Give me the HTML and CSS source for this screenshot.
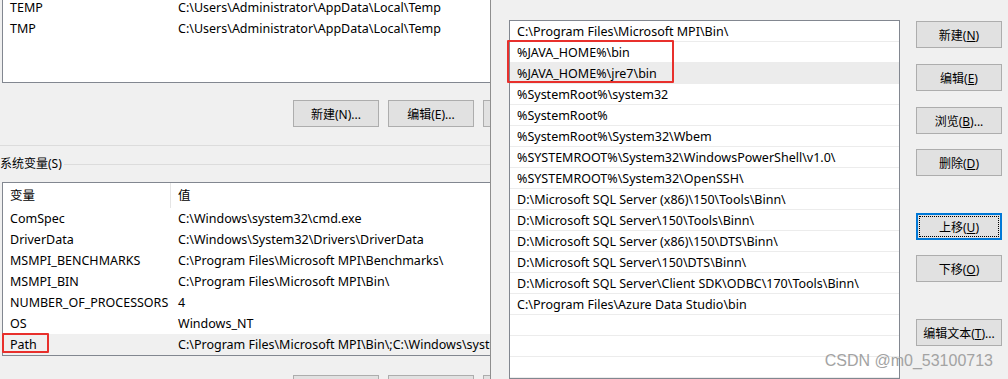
FILE: index.html
```html
<!DOCTYPE html>
<html lang="zh-CN">

<head>
  <meta charset="utf-8" />
  <meta name="viewport" content="width=device-width, initial-scale=1.0" />
  <title>环境变量</title>

  <link rel="stylesheet" href="styles.css">

</head>

<body>

  <div class="screen">

    <!-- environment variables dialog (behind) -->
    <section class="env">

      <div class="list user-list">
        <div class="row"><span class="name">TEMP</span><span class="val">C:\Users\Administrator\AppData\Local\Temp</span></div>
        <div class="row"><span class="name">TMP</span><span class="val">C:\Users\Administrator\AppData\Local\Temp</span></div>
      </div>

      <div class="btn-row">
        <button class="btn">新建(N)...</button>
        <button class="btn">编辑(E)...</button>
        <button class="btn">删除(D)</button>
      </div>

      <div class="group-end"></div>

      <div class="group-title">
        <span>系统变量(S)</span>
        <div class="group-line"></div>
      </div>

      <div class="list sys-list">
        <div class="row head"><span class="name">变量</span><span class="val">值</span></div>
        <div class="row"><span class="name">ComSpec</span><span class="val">C:\Windows\system32\cmd.exe</span></div>
        <div class="row"><span class="name">DriverData</span><span class="val">C:\Windows\System32\Drivers\DriverData</span></div>
        <div class="row"><span class="name">MSMPI_BENCHMARKS</span><span class="val">C:\Program Files\Microsoft MPI\Benchmarks\</span></div>
        <div class="row"><span class="name">MSMPI_BIN</span><span class="val">C:\Program Files\Microsoft MPI\Bin\</span></div>
        <div class="row"><span class="name">NUMBER_OF_PROCESSORS</span><span class="val">4</span></div>
        <div class="row"><span class="name">OS</span><span class="val">Windows_NT</span></div>
        <div class="row selected">
          <span class="name">Path<span class="mark path-mark"></span></span>
          <span class="val">C:\Program Files\Microsoft MPI\Bin\;C:\Windows\system32;C:\Windows</span>
        </div>
      </div>

      <div class="btn-row bottom">
        <button class="btn">新建(W)...</button>
        <button class="btn">编辑(I)...</button>
        <button class="btn">删除(L)</button>
      </div>

    </section>

    <!-- edit path dialog -->
    <section class="edit">

      <div class="path-list">
        <div class="mark java-mark"></div>
        <div class="item">C:\Program Files\Microsoft MPI\Bin\</div>
        <div class="item">%JAVA_HOME%\bin</div>
        <div class="item hover">%JAVA_HOME%\jre7\bin</div>
        <div class="item">%SystemRoot%\system32</div>
        <div class="item">%SystemRoot%</div>
        <div class="item">%SystemRoot%\System32\Wbem</div>
        <div class="item">%SYSTEMROOT%\System32\WindowsPowerShell\v1.0\</div>
        <div class="item">%SYSTEMROOT%\System32\OpenSSH\</div>
        <div class="item">D:\Microsoft SQL Server (x86)\150\Tools\Binn\</div>
        <div class="item">D:\Microsoft SQL Server\150\Tools\Binn\</div>
        <div class="item">D:\Microsoft SQL Server (x86)\150\DTS\Binn\</div>
        <div class="item">D:\Microsoft SQL Server\150\DTS\Binn\</div>
        <div class="item">D:\Microsoft SQL Server\Client SDK\ODBC\170\Tools\Binn\</div>
        <div class="item">C:\Program Files\Azure Data Studio\bin</div>
        <div class="item"></div>
        <div class="item"></div>
        <div class="item"></div>
      </div>

      <div class="side-btns">
        <button class="btn">新建(<u>N</u>)</button>
        <button class="btn">编辑(<u>E</u>)</button>
        <button class="btn">浏览(<u>B</u>)...</button>
        <button class="btn tight">删除(<u>D</u>)</button>
        <button class="btn focus gap">上移(<u>U</u>)</button>
        <button class="btn tight">下移(<u>O</u>)</button>
        <button class="btn gap">编辑文本(<u>T</u>)...</button>
      </div>

      <div class="watermark">CSDN @m0_53100713</div>

    </section>

  </div>

</body>

</html>
```

FILE: styles.css
```css
* {
  padding: 0;
  margin: 0;
  box-sizing: border-box;
}

body {
  width: 1008px;
  height: 379px;
  overflow: hidden;
  background-color: #f0f0f0;
  font-family: "Noto Sans", "Noto Sans CJK SC", sans-serif;
  font-size: 12.5px;
  color: #000000;
}

.screen {
  display: flex;
  height: 379px;
}

/* ---- left dialog ---- */

.env {
  width: 490px;
  flex-shrink: 0;
  overflow: hidden;
}

.list {
  background-color: #ffffff;
  border: 1px solid #828790;
  margin-left: 2px;
  width: 500px;
}

.user-list {
  margin-top: -4px;
  height: 87px;
}

.row {
  display: grid;
  grid-template-columns: 168px 1fr;
  height: 21px;
  line-height: 21px;
  white-space: nowrap;
}

.row .name {
  position: relative;
  padding-left: 7px;
}

.row .val {
  padding-left: 7px;
  overflow: hidden;
}

.row.head {
  height: 25px;
  line-height: 25px;
}

.row.head .name {
  border-right: 1px solid #e5e5e5;
}

.row.selected {
  background-color: #f0f0f0;
}

.btn-row {
  display: flex;
  gap: 9px;
  margin-top: 17px;
  padding-left: 293px;
}

.btn-row.bottom {
  margin-top: 19px;
}

.btn {
  flex-shrink: 0;
  width: 86px;
  height: 27px;
  background-color: #e1e1e1;
  border: 1px solid #adadad;
  font-family: inherit;
  font-size: 12px;
  color: #000000;
}

.btn u {
  text-underline-offset: 1px;
}

.group-end {
  height: 1px;
  margin-top: 18px;
  background-color: #dcdcdc;
}

.group-title {
  display: flex;
  align-items: center;
  height: 18px;
  line-height: 18px;
  margin-top: 9px;
  font-size: 12px;
}

.group-line {
  flex: 1;
  height: 1px;
  margin-left: 2px;
  background-color: #dcdcdc;
}

.sys-list {
  margin-top: 9px;
}

/* red annotation boxes */
.mark {
  position: absolute;
  border: 2px solid #e8302c;
  border-radius: 1px;
}

.path-mark {
  left: -1px;
  top: -1px;
  width: 47px;
  height: 20px;
}

/* ---- right dialog ---- */

.edit {
  position: relative;
  flex: 1;
  display: flex;
  align-items: flex-start;
  border-left: 1px solid #8e8e8e;
  overflow: hidden;
}

.path-list {
  position: relative;
  width: 391px;
  margin-top: 20px;
  margin-left: 18px;
  background-color: #ffffff;
  border: 1px solid #828790;
}

.item {
  height: 21px;
  padding-top: 1px;
  line-height: 19px;
  padding-left: 7px;
  border-bottom: 1px solid #ececec;
  white-space: nowrap;
  overflow: hidden;
}

.item.hover {
  background-color: #ececec;
}

.java-mark {
  left: -3px;
  top: 19px;
  width: 167px;
  height: 43px;
}

.side-btns {
  display: flex;
  flex-direction: column;
  gap: 16px;
  margin-top: 21px;
  margin-left: 16px;
}

.side-btns .tight {
  margin-top: -1px;
}

.side-btns .gap {
  margin-top: 21px;
}

.btn.focus {
  border: 2px solid #0078d7;
  outline: 1px dotted #000000;
  outline-offset: -4px;
}

.watermark {
  position: absolute;
  right: 15px;
  bottom: 9px;
  font-family: "Liberation Sans", Arial, sans-serif;
  font-size: 16px;
  color: #a3a3a3;
}
```
